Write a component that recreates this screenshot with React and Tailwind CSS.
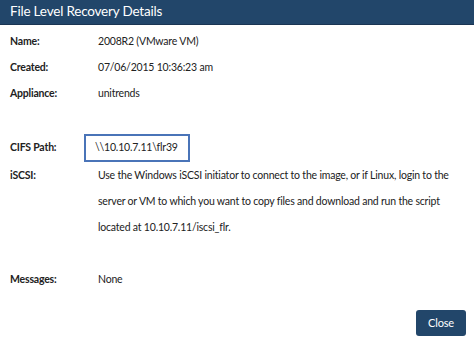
export default function App() {
  const rows = [
    { label: "Name:", value: "2008R2 (VMware VM)" },
    { label: "Created:", value: "07/06/2015 10:36:23 am" },
    { label: "Appliance:", value: "unitrends" },
  ];

  return (
    <div
      className="w-[474px] h-[343px] bg-white flex flex-col overflow-hidden"
      style={{ fontFamily: "Lato, 'Open Sans', sans-serif" }}
    >
      {/* Title bar */}
      <div className="h-[25px] bg-[#22466a] border-b border-[#1a3553] flex items-center pl-[10px]">
        <span className="text-white text-[13.5px] tracking-[-0.2px] leading-none">File Level Recovery Details</span>
      </div>

      <div className="flex-1 flex flex-col pl-[10px] pr-[10px] pt-[4px] text-[10.5px] tracking-[-0.2px] text-[#222]">
        {rows.map((r) => (
          <div key={r.label} className="flex h-[26px] items-center">
            <div className="w-[88px] font-bold">{r.label}</div>
            <div>{r.value}</div>
          </div>
        ))}

        <div className="h-[28px]" />

        <div className="flex h-[26px] items-center">
          <div className="w-[88px] font-bold">CIFS Path:</div>
          <div className="-ml-[14px] h-[28px] w-[106px] border-2 border-[#4a74b8] flex items-center pl-[9px]">
            \\10.10.7.11\flr39
          </div>
        </div>

        <div className="flex mt-[1px]">
          <div className="w-[88px] font-bold leading-[26px]">iSCSI:</div>
          <div className="flex-1 leading-[26px] whitespace-nowrap">
            Use the Windows iSCSI initiator to connect to the image, or if Linux, login to the
            <br />
            server or VM to which you want to copy files and download and run the script
            <br />
            located at 10.10.7.11/iscsi_flr.
          </div>
        </div>

        <div className="h-[27px]" />

        <div className="flex h-[26px] items-center">
          <div className="w-[88px] font-bold">Messages:</div>
          <div>None</div>
        </div>

        <div className="flex justify-end mt-[17px]">
          <button className="h-[26px] w-[50px] -mr-[2px] rounded-[3px] bg-[#22466a] text-white text-[11px]">
            Close
          </button>
        </div>
      </div>
    </div>
  );
}
